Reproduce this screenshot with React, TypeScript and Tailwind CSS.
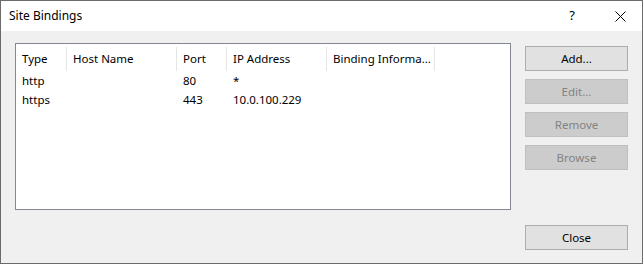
import React from "react";

type Col = { label: string; width: string };

const cols: Col[] = [
  { label: "Type", width: "w-[51px]" },
  { label: "Host Name", width: "w-[110px]" },
  { label: "Port", width: "w-[50px]" },
  { label: "IP Address", width: "w-[100px]" },
  { label: "Binding Informa...", width: "w-[108px]" },
];

const rows = [
  ["http", "", "80", "*", ""],
  ["https", "", "443", "10.0.100.229", ""],
];

function DlgButton({ label, disabled }: { label: string; disabled?: boolean }) {
  return (
    <button
      className={
        disabled
          ? "h-[25px] w-[103px] border border-[#bfbfbf] bg-[#cccccc] text-[#838383] leading-none"
          : "h-[25px] w-[103px] border border-[#adadad] bg-[#e1e1e1] text-black leading-none"
      }
    >
      {label}
    </button>
  );
}

export default function App() {
  return (
    <div className="w-[644px] h-[265px] bg-white font-['Noto_Sans',sans-serif] text-[11.5px]">
      <div className="w-[643px] h-[264px] border border-[#6b6b6b] flex flex-col">
        {/* title bar */}
        <div className="h-[30px] bg-white flex items-center pl-[8px] shrink-0">
          <span className="text-black text-[12px]">Site Bindings</span>
          <span className="ml-auto mr-[40px] text-[13px]">?</span>
          <svg width="11" height="11" viewBox="0 0 11 11" className="mr-[16px]">
            <path d="M0.5 0.5 L10.5 10.5 M10.5 0.5 L0.5 10.5" stroke="#000" strokeWidth="1" />
          </svg>
        </div>

        {/* body */}
        <div className="flex-1 bg-[#f0f0f0] flex pl-[14px] pt-[12px] pr-[14px]">
          <div className="w-[496px] h-[167px] border border-[#828790] bg-white">
            <div className="flex h-[27px]">
              {cols.map((c) => (
                <div key={c.label} className={`${c.width} h-full pt-[3px]`}>
                  <div className="h-full border-r border-[#e5e5e5] flex items-center pl-[6px] whitespace-nowrap overflow-hidden">
                    {c.label}
                  </div>
                </div>
              ))}
            </div>
            {rows.map((r, i) => (
              <div key={i} className="flex h-[19px] items-center pt-[1px]">
                {r.map((v, j) => (
                  <div key={j} className={`${cols[j].width} pl-[6px] whitespace-nowrap`}>
                    {v}
                  </div>
                ))}
              </div>
            ))}
          </div>

          <div className="ml-[14px] flex flex-col pt-[3px] gap-[8px] h-[207px]">
            <DlgButton label="Add..." />
            <DlgButton label="Edit..." disabled />
            <DlgButton label="Remove" disabled />
            <DlgButton label="Browse" disabled />
            <div className="mt-auto">
              <DlgButton label="Close" />
            </div>
          </div>
        </div>
      </div>
    </div>
  );
}
